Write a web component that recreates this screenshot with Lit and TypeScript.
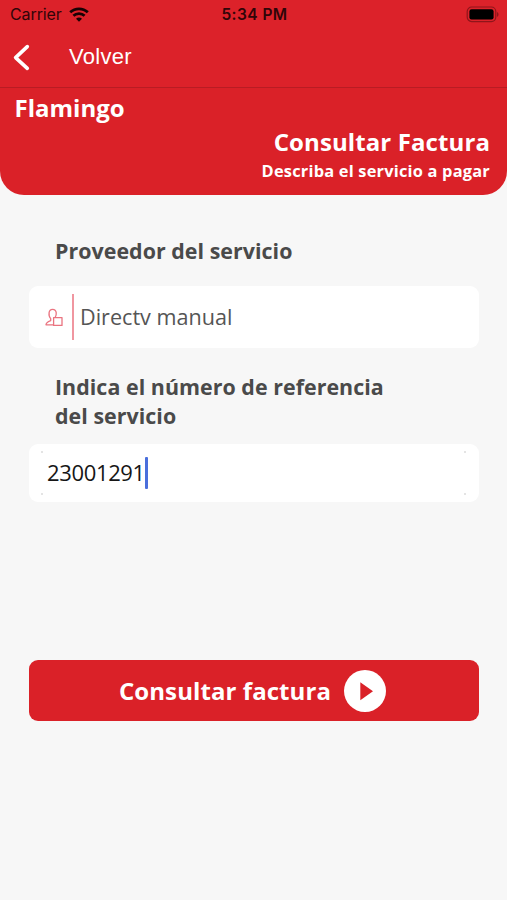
import { LitElement, html, css } from "lit";
import { customElement } from "lit/decorators.js";

@customElement("status-bar")
class StatusBar extends LitElement {
  static styles = css`
    :host { display: grid; grid-template-columns: 1fr auto 1fr; align-items: center; height: 30px; padding: 0 8px 0 10px; color: #300508; font: 16px/30px Inter, sans-serif; }
    .left { display: flex; align-items: center; gap: 7px; letter-spacing: -0.1px; line-height: 29px; height: 29px; margin-bottom: 1px; }
    .time { font-weight: 600; font-size: 15.5px; letter-spacing: 0.45px; line-height: 30px; }
    .battery { justify-self: end; margin-top: -2px; }
    .wifi { margin-top: -1px; }
    svg { display: block; }
  `;
  render() {
    return html`
      <div class="left"><span>Carrier</span>
        <svg class="wifi" width="20" height="15" viewBox="0 0 20 15" fill="none" stroke="#180204" stroke-width="2.8">
          <path d="M1.2 5.3C6.1.6 13.9.6 18.8 5.3" /><path d="M4.4 8.8C7.5 5.9 12.5 5.9 15.6 8.8" />
          <path d="M7 11.7C8.7 10.2 11.3 10.2 13 11.7L10 14.7Z" fill="#180204" stroke="none" />
        </svg>
      </div>
      <span class="time">5:34 PM</span>
      <svg class="battery" width="33" height="17" viewBox="0 0 33 17">
        <rect x="1.2" y="1" width="28.6" height="14.6" rx="4.5" fill="none" stroke="#8f151a" stroke-width="1.2" />
        <rect x="3.4" y="3.2" width="24.2" height="10.2" rx="2.2" fill="#000" />
        <path d="M31 6v4.8c2-.8 2-4 0-4.8Z" fill="#8f151a" />
      </svg>`;
  }
}

@customElement("app-root")
class AppRoot extends LitElement {
  static styles = css`
    :host { display: flex; flex-direction: column; height: 900px; overflow: hidden; background: #f7f7f7; font-family: "Open Sans", sans-serif; }
    * { box-sizing: border-box; }
    svg { display: block; flex: none; }
    .bar { background: #dc222a; height: 88px; border-bottom: 1px solid #b91c23; }
    .back { display: flex; align-items: center; height: 54px; padding: 0 0 0 12px; color: #fff; font: 22px/54px "Liberation Sans", sans-serif; letter-spacing: 0.3px; gap: 39px; }
    .hero { display: flex; flex-direction: column; height: 107px; flex: none; background: #da2128; border-radius: 0 0 24px 24px; color: #fff; padding: 3px 17px 0 14.5px; font-weight: 700; }
    .name { font-size: 24px; line-height: 33px; }
    .title { margin-top: 1px; font-size: 24px; line-height: 34px; align-self: flex-end; letter-spacing: 0.1px; }
    .sub { margin-top: -1px; font-size: 16.4px; line-height: 25px; align-self: flex-end; letter-spacing: 0.2px; }
    form { display: flex; flex-direction: column; padding: 41px 28px 0 29px; }
    .label { margin: 0 60px 0 26px; font-weight: 700; font-size: 21.4px; letter-spacing: 0.04px; line-height: 29px; color: #4a4a4a; }
    .field { display: flex; align-items: center; background: #fff; border-radius: 9px; }
    .provider { height: 62px; margin: 21px 0 24px; padding-left: 16px; color: #555; font-size: 21.6px; }
    .provider span { padding-bottom: 2px; }
    .rule { width: 2px; height: 46px; background: #f096a0; margin: 0 6px 0 9px; }
    .reference { height: 58px; margin-top: 14px; padding: 0 12px 0 11px; }
    .entry {
      display: flex; align-items: center; width: 100%; height: 46px; padding-left: 7px; color: #161616; font-size: 22px; letter-spacing: -0.35px;
      background:
        radial-gradient(circle, #e4e4e4 1px, transparent 1.5px) 0 0 / 4px 4px no-repeat,
        radial-gradient(circle, #e4e4e4 1px, transparent 1.5px) 100% 0 / 4px 4px no-repeat,
        radial-gradient(circle, #e4e4e4 1px, transparent 1.5px) 0 100% / 4px 4px no-repeat,
        radial-gradient(circle, #e4e4e4 1px, transparent 1.5px) 100% 100% / 4px 4px no-repeat;
    }
    .entry span { padding-bottom: 2px; }
    .caret { width: 3px; height: 32px; background: #4a6fdc; border-radius: 1px; }
    .submit { display: flex; align-items: center; justify-content: center; gap: 13px; height: 61px; margin-top: 158px; padding: 0 3px 0 0; border: 0; border-radius: 9px; background: #da2128; color: #fff; font: 700 24px/33px "Open Sans", sans-serif; letter-spacing: 0.08px; }
    .submit span { padding-bottom: 1px; }
  `;
  render() {
    return html`
      <header class="bar">
        <status-bar></status-bar>
        <div class="back">
          <svg width="18" height="28" viewBox="0 0 18 28" fill="none" stroke="#fff" stroke-width="3.6" stroke-linecap="round" stroke-linejoin="round"><path d="M15.3 3.6 3.6 14.6 15.3 25.4" /></svg>
          <span>Volver</span>
        </div>
      </header>
      <section class="hero">
        <div class="name">Flamingo</div>
        <div class="title">Consultar Factura</div>
        <div class="sub">Describa el servicio a pagar</div>
      </section>
      <form>
        <div class="label">Proveedor del servicio</div>
        <div class="field provider">
          <svg width="18" height="20" viewBox="0 0 18 20" fill="none" stroke="#ea7480" stroke-width="1.3" stroke-linejoin="round">
            <path d="M8.6 17.8H1C1 15.6 2.4 14.8 5.7 13.6V11.6C4.1 10 3.9 7.4 4.1 5.6 4.4 3.4 5.8 2.3 7.6 2.3s3.3 1.1 3.6 3.3c.2 1.8 0 3.4-1 4.8" />
            <path d="M8.6 10.6H17V18.4H8.6Z" />
          </svg>
          <div class="rule"></div>
          <span>Directv manual</span>
        </div>
        <div class="label">Indica el número de referencia del servicio</div>
        <div class="field reference"><div class="entry"><span>23001291</span><i class="caret"></i></div></div>
        <button class="submit" type="button">
          <span>Consultar factura</span>
          <svg width="42" height="42" viewBox="0 0 42 42"><circle cx="21" cy="21" r="21" fill="#fff" /><path d="M16.3 12.2V30.2L29 21.2Z" fill="#da2128" /></svg>
        </button>
      </form>`;
  }
}
